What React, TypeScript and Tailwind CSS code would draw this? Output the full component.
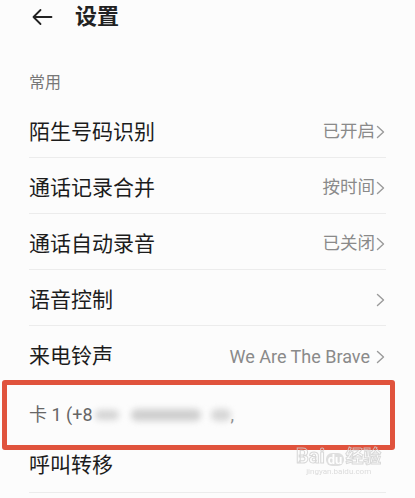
import React from "react";

const Chevron = () => (
  <svg width="9" height="14" viewBox="0 0 9 14" className="shrink-0">
    <polyline points="1.5,1.5 7.5,7 1.5,12.5" fill="none" stroke="#9a9a9a" strokeWidth="1.4" strokeLinecap="round" strokeLinejoin="round" />
  </svg>
);

type RowProps = { label: string; value?: string; latin?: boolean; divider?: boolean };

const Row = ({ label, value, latin, divider = true }: RowProps) => (
  <div className="px-[29px]">
    <div className={`h-[56px] pt-[5px] flex items-center justify-between ${divider ? "border-b border-[#ececec]" : ""}`}>
      <span className="text-[21px] leading-none text-[#1c1c1c]">{label}</span>
      <span className="flex items-center pr-[1px]">
        {value && (
          <span className={`leading-none text-[#8a8a8a] ${latin ? "text-[18px] mr-[6px]" : "text-[17.5px] mr-[1px]"}`}>{value}</span>
        )}
        <Chevron />
      </span>
    </div>
  </div>
);

export default function App() {
  return (
    <div
      className="relative w-[415px] h-[498px] overflow-hidden bg-[#fcfcfc]"
      style={{ fontFamily: 'Roboto, "Noto Sans CJK SC", sans-serif' }}
    >
      {/* header */}
      <div className="h-[34px] flex items-center pl-[31px]">
        <svg width="22" height="18" viewBox="0 0 22 18">
          <path d="M20.5 9H2.5M9.5 2L2.5 9L9.5 16" fill="none" stroke="#222" strokeWidth="1.8" strokeLinecap="round" strokeLinejoin="round" />
        </svg>
        <span className="ml-[22px] text-[22px] leading-none font-bold text-[#222]">设置</span>
      </div>

      {/* section label */}
      <div className="mt-[39px] pl-[29px] h-[20px] flex items-center text-[16px] leading-none text-[#777]">常用</div>

      <div className="mt-[9px]">
        <Row label="陌生号码识别" value="已开启" />
        <Row label="通话记录合并" value="按时间" />
        <Row label="通话自动录音" value="已关闭" />
        <Row label="语音控制" />
        <Row label="来电铃声" value="We Are The Brave" latin divider={false} />
      </div>

      {/* highlighted card row */}
      <div className="ml-[2px] mr-[20px] h-[70px] border-[5px] border-[#e0533d] rounded-[3px] flex items-center pl-[22px] -mt-[2px]">
        <span className="text-[18px] leading-none text-[#666]">卡 1 (+8</span>
        <span className="ml-[2px] w-[24px] h-[10px] bg-[#d4d4d4] rounded-full blur-[3px]" />
        <span className="ml-[12px] w-[70px] h-[12px] bg-[#cfcfcf] rounded-full blur-[3px]" />
        <span className="ml-[10px] w-[20px] h-[12px] bg-[#d6d6d6] rounded-full blur-[3px]" />
        <span className="text-[18px] leading-none text-[#888]">,</span>
      </div>

      <div className="px-[29px]">
        <div className="h-[43px] pb-[12px] flex items-center border-b border-[#ececec]">
          <span className="text-[21px] leading-none text-[#1c1c1c]">呼叫转移</span>
        </div>
      </div>

      {/* watermark */}
      <div className="absolute left-[296px] top-[446px] flex flex-col items-center opacity-80 pointer-events-none">
        <div className="flex items-end leading-none">
          <span className="text-[20px] font-bold text-transparent" style={{ WebkitTextStroke: "1px #d0d0d0" }}>Bai</span>
          <span className="relative mx-[1px] text-[13px] font-bold text-white bg-[#d8d8d8] rounded-[6px] px-[2px]">
            du
          </span>
          <span className="text-[18px] font-bold text-transparent" style={{ WebkitTextStroke: "1px #d0d0d0" }}>经验</span>
        </div>
        <span className="text-[8px] text-[#d4d4d4] leading-none mt-[2px]">jingyan.baidu.com</span>
      </div>
    </div>
  );
}
